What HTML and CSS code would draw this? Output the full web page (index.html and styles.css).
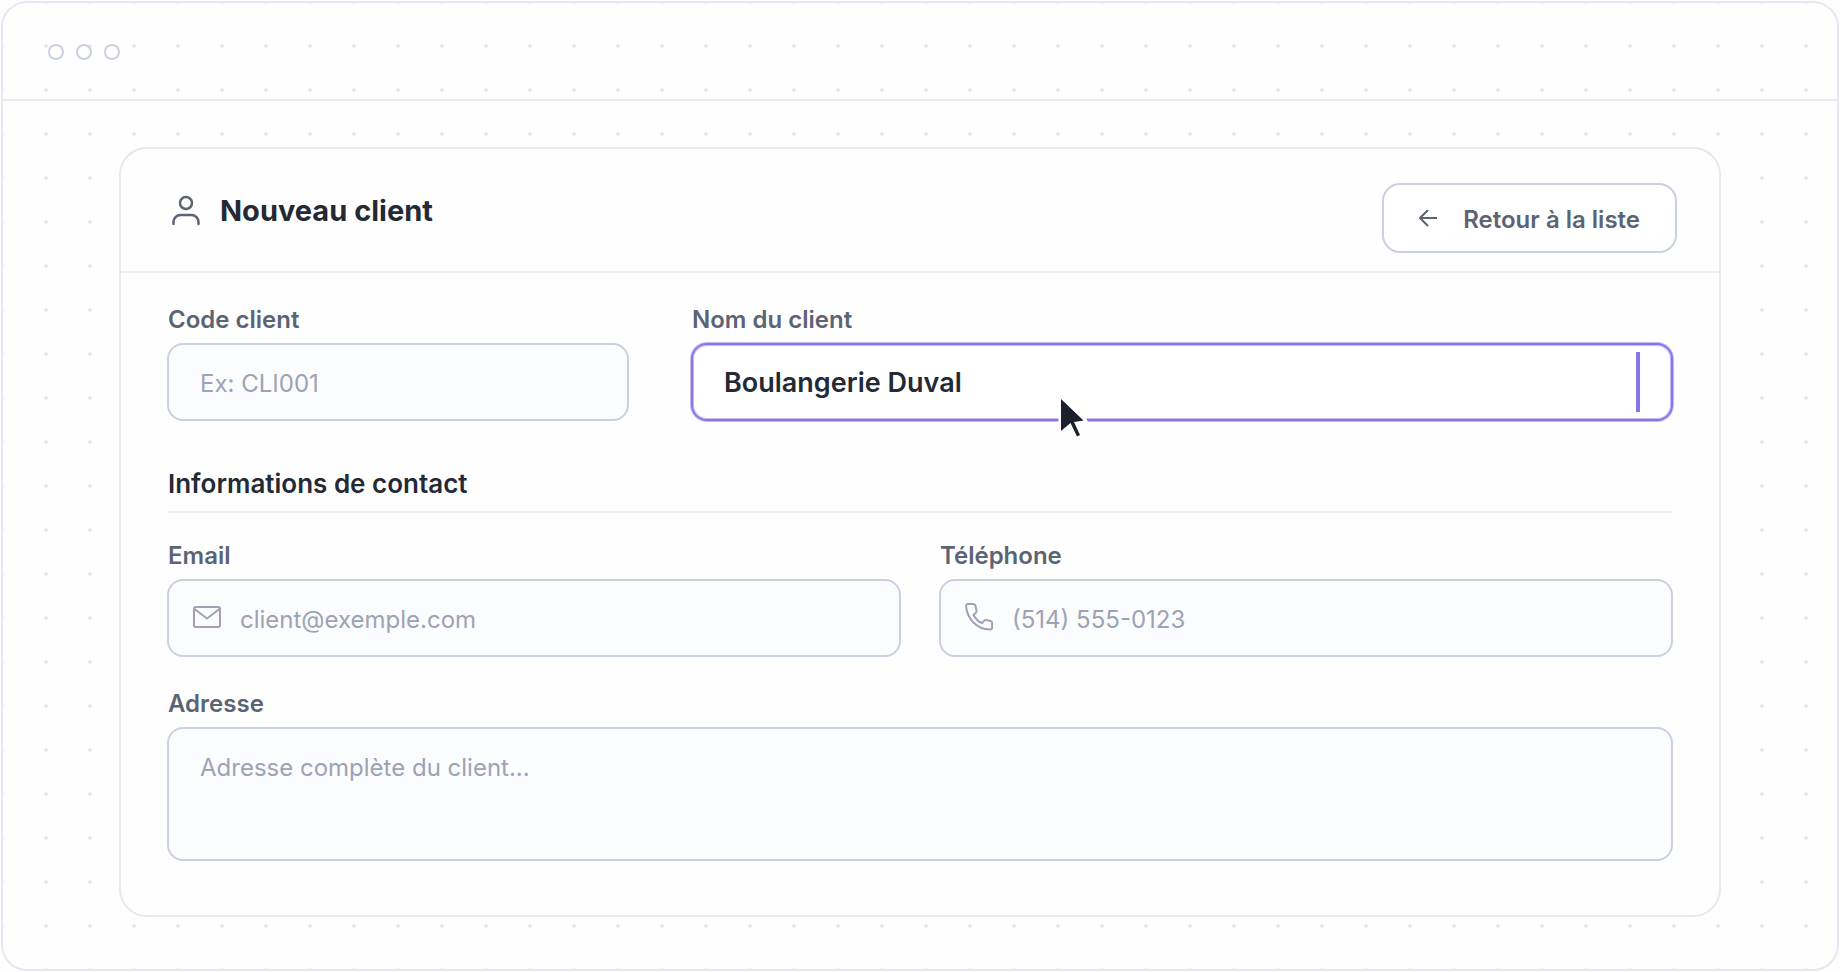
FILE: index.html
```html
<!DOCTYPE html>
<html lang="fr">
<head>
<meta charset="utf-8">
<title>Nouveau client</title>
<link rel="stylesheet" href="styles.css">
</head>
<body>
<div class="window">
  <div class="titlebar"><span class="dot"></span><span class="dot"></span><span class="dot"></span></div>
  <main class="card">
    <header class="card-header">
      <h1 class="title">
        <svg class="title-icon" width="32" height="32" viewBox="0 0 32 32" aria-hidden="true"><circle cx="16" cy="8" r="6"/><path d="M3.500 29v-2a7 7 0 0 1 7-7h11a7 7 0 0 1 7 7v2"/></svg>
        Nouveau client
      </h1>
      <button class="back" type="button">
        <svg width="18" height="18" viewBox="0 0 18 18" aria-hidden="true"><path d="M1 8h16.500M8.500 0.500L1 8l7.500 7.500"/></svg>
        Retour à la liste
      </button>
    </header>
    <form class="form">
      <div class="row row-identity">
        <div class="field">
          <label class="label" for="code">Code client</label>
          <input class="input" id="code" type="text" placeholder="Ex: CLI001">
        </div>
        <div class="field">
          <label class="label" for="name">Nom du client</label>
          <div class="control">
            <input class="input input-active" id="name" type="text" value="Boulangerie Duval">
            <span class="caret"></span>
            <svg class="pointer" width="36" height="44" viewBox="0 0 36 44" aria-hidden="true"><path class="pointer-halo" d="M6 4v32l9-8 7 14 4-2-6-13 10-1z"/><path class="pointer-shape" d="M6 4v32l9.500-8 6.500 13.500 3-1.500-6-13 9.500-1.500z"/></svg>
          </div>
        </div>
      </div>
      <h2 class="section">Informations de contact</h2>
      <div class="row row-contact">
        <div class="field">
          <label class="label" for="email">Email</label>
          <div class="control">
            <svg class="field-icon" width="32" height="32" viewBox="0 0 32 32" aria-hidden="true"><rect x="3" y="5" width="26" height="20" rx="2"/><path d="M3.500 7L16 16.500 28.500 7"/></svg>
            <input class="input input-icon" id="email" type="email" placeholder="client@exemple.com">
          </div>
        </div>
        <div class="field">
          <label class="label" for="phone">Téléphone</label>
          <div class="control">
            <svg class="field-icon" width="32" height="32" viewBox="0 0 32 32" aria-hidden="true"><path d="M5 2h5.500c1 0 1.800.7 2 1.700l1 5c.2.900-.1 1.600-.8 2.200l-2.200 1.800c1.800 3.800 4.600 6.700 8.500 8.500l2-2.400c.6-.7 1.400-1 2.300-.8l4.200.9c1 .2 1.600 1 1.600 2v4.600c0 1.300-1 2.200-2.300 2.100C14 27 4.500 17.500 3 4.300 2.900 3 3.700 2 5 2z"/></svg>
            <input class="input input-icon" id="phone" type="tel" placeholder="(514) 555-0123">
          </div>
        </div>
      </div>
      <div class="field">
        <label class="label" for="address">Adresse</label>
        <textarea class="input textarea" id="address" placeholder="Adresse complète du client..."></textarea>
      </div>
    </form>
  </main>
</div>
</body>
</html>
```
FILE: styles.css
```css
* {
  box-sizing: border-box;
}

body {
  margin: 0;
  padding: 1px;
  min-height: 100vh;
  background: #fefefe;
  color: #232a36;
  font-family: Inter, "Liberation Sans", sans-serif;
  font-size: 24px;
}

svg {
  flex: none;
  fill: none;
  stroke: currentColor;
  stroke-width: 2;
  stroke-linecap: round;
  stroke-linejoin: round;
}

.window {
  padding-bottom: 52px;
  border: 2px solid #e5e8f0;
  border-radius: 26px;
  background: radial-gradient(circle at 2px 2px, #e9eaf3 2px, transparent 2px) -3px -3px / 44px 44px;
}

.titlebar {
  display: flex;
  align-items: center;
  gap: 12px;
  height: 98px;
  padding: 0 45px;
  border-bottom: 2px solid #e5e8f0;
}

.dot {
  width: 16px;
  height: 16px;
  margin-top: 2px;
  border: 2px solid #c9d0df;
  border-radius: 50%;
  background: #fff;
}

.card {
  margin: 46px 116px 0;
  border: 2px solid #e5e8f0;
  border-radius: 28px;
  background: #fefefe;
}

.card-header {
  display: flex;
  justify-content: space-between;
  align-items: flex-start;
  height: 124px;
  padding: 34px 42px 0 49px;
  border-bottom: 2px solid #eff0f5;
}

.title {
  display: flex;
  align-items: center;
  gap: 18px;
  margin: 10px 0 0;
  font-size: 29px;
  font-weight: 700;
  line-height: 36px;
}

.title-icon {
  color: #5c6474;
  stroke-width: 2.5;
}

.back {
  display: flex;
  align-items: center;
  gap: 26px;
  height: 70px;
  padding: 2px 35px 0;
  border: 2px solid #c9d0df;
  border-radius: 18px;
  background: #fff;
  color: #5c6474;
  font: inherit;
  font-weight: 600;
}

.form {
  padding: 30px 46px 54px;
}

.row {
  display: grid;
}

.row-identity {
  grid-template-columns: 462fr 982fr;
  gap: 62px;
}

.row-contact {
  grid-template-columns: 1fr 1fr;
  gap: 38px;
  margin-bottom: 30px;
}

.field {
  display: flex;
  flex-direction: column;
  gap: 7px;
}

.label {
  padding: 1px 1px 0;
  color: #5c6474;
  font-weight: 600;
  line-height: 32px;
}

.control {
  position: relative;
}

.input {
  width: 100%;
  height: 78px;
  padding: 2px 31px 0;
  border: 2px solid #c9d0df;
  border-radius: 16px;
  outline: none;
  background: #fbfcfe;
  color: #232a36;
  font: inherit;
}

.input::placeholder {
  color: #9ca3b4;
  opacity: 1;
}

.input-active {
  display: block;
  padding-top: 0;
  border-color: #8676ec;
  background: #fff;
  box-shadow: 0 0 0 1px #c3bbf6, inset 0 0 0 1px #c3bbf6;
  font-size: 27px;
  font-weight: 600;
}

.input-icon {
  display: block;
  padding-left: 71px;
}

.field-icon {
  position: absolute;
  top: 23px;
  left: 24px;
  color: #9ca3b4;
}

.textarea {
  height: 134px;
  padding: 23px 31px;
  line-height: 32px;
  resize: none;
}

.section {
  margin: 47px 1px 26px;
  padding-bottom: 11px;
  border-bottom: 2px solid #eff0f5;
  font-size: 26px;
  font-weight: 600;
  line-height: 32px;
}

.caret {
  position: absolute;
  top: 9px;
  right: 33px;
  width: 4px;
  height: 60px;
  background: #8676ec;
}

.pointer {
  position: absolute;
  top: 52px;
  left: 364px;
}

.pointer-halo {
  stroke: #fff;
  stroke-width: 5;
}

.pointer-shape {
  fill: #1a202c;
  stroke: none;
}
```
